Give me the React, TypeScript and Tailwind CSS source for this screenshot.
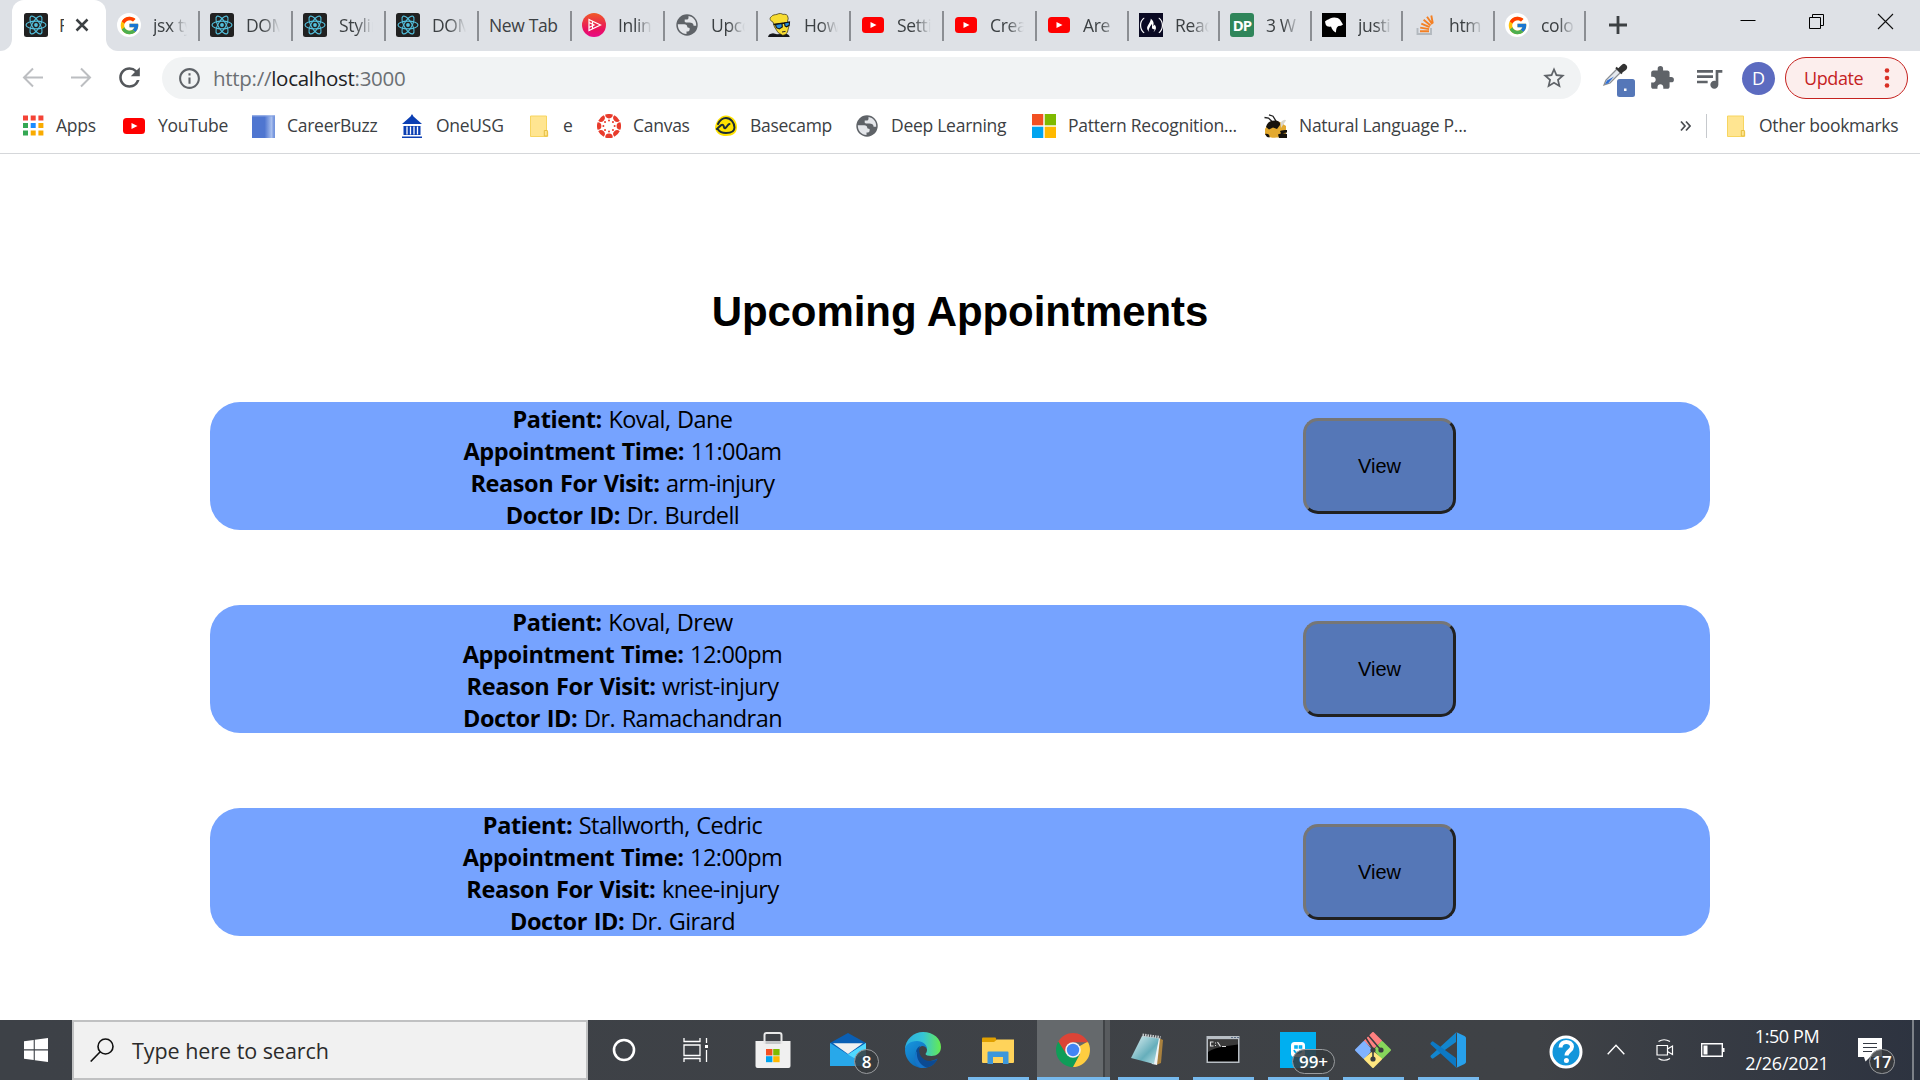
import React from "react";
import { FcGoogle } from "react-icons/fc";
import { SiFreecodecamp } from "react-icons/si";
import { MdExtension, MdInfoOutline, MdQueueMusic, MdRefresh, MdStarBorder } from "react-icons/md";

const ReactIcon = () => (
  <svg className="shrink-0" width="24" height="24" viewBox="0 0 24 24">
    <rect width="24" height="24" rx="2.5" fill="#212121" />
    <g fill="none" stroke="#53c1de" strokeWidth="1.1">
      <ellipse cx="12" cy="12" rx="10" ry="3.9" />
      <ellipse cx="12" cy="12" rx="10" ry="3.9" transform="rotate(60 12 12)" />
      <ellipse cx="12" cy="12" rx="10" ry="3.9" transform="rotate(120 12 12)" />
    </g>
    <circle cx="12" cy="12" r="1.9" fill="#53c1de" />
  </svg>
);

const GoogleIcon = () => (
  <span className="flex size-6 items-center justify-center rounded-full bg-white">
    <FcGoogle size={21} />
  </span>
);

const YouTubeIcon = () => (
  <svg width="24" height="24" viewBox="0 0 24 24">
    <rect x="1" y="4" width="22" height="16" rx="3.5" fill="#f00" />
    <path d="M9.5 9v6l6-3z" fill="#fff" />
  </svg>
);

const GlobeIcon = () => (
  <svg width="24" height="24" viewBox="0 0 24 24">
    <circle cx="12" cy="12" r="10.7" fill="#5f6368" />
    <path
      d="M2.8 11.2h6.4c2 0 3 1.2 3 2.4 0 1.1.9 1.4 2.4 1.4v1.8c0 .8-.6 1.6-1.6 1.6h-1.5v2.7C6.4 20.6 2.8 16.9 2.8 11.2zM13.5 2.9v2c0 .9-.7 1.5-1.7 1.5H9.7v2.2c0 .5.5.9 1 .9h3.6c2.5 0 4.3 1.2 4.3 3.2h2.6C21.5 7.4 18.2 3.5 13.5 2.9z"
      fill="#e4e6ea"
    />
  </svg>
);

const PlayIcon = () => (
  <svg width="24" height="24" viewBox="0 0 24 24">
    <defs>
      <linearGradient id="play" x1="0" y1="0" x2="0" y2="1">
        <stop offset="0" stopColor="#f05a28" />
        <stop offset="0.7" stopColor="#e9105e" />
        <stop offset="1" stopColor="#e80a89" />
      </linearGradient>
    </defs>
    <circle cx="12" cy="12" r="12" fill="url(#play)" />
    <path d="M7 6.5 18.5 12 7 17.5zM7 9.500l5 2.500-5 2.500M10.500 8.200v7.600" fill="none" stroke="#fff" strokeWidth="1.2" />
  </svg>
);

const AvatarIcon = () => (
  <svg width="24" height="24" viewBox="0 0 24 24">
    <path d="M0 24c.5-2.500 2-3.400 5-3.800l4 1 8-.5c2.500.2 4 1 4.800 3.300z" fill="#15171c" />
    <path d="M5 9C2 8 1 5 3.500 3.500 5 1.500 7 2 9 1.300c2.500-1.300 4.500-.8 6 .1 2.500-.6 5 .6 4.800 2.600.8 1.500.2 2.500-.3 4L21 13l-1.500 6c-1 2-3 3.500-5 3.200L10 19.500 6.500 14z" fill="#f7dc32" stroke="#332e12" strokeWidth=".7" />
    <path d="M5.500 11.500L21 9.500" stroke="#111" strokeWidth="1.3" />
    <path d="M7.500 11.500l6.500-1 .3 3.500-3 2-3-1.300zM16.500 10l5-1-.3 3.300-2.700 1.500-1.500-.8z" fill="#2a8fdd" stroke="#111" strokeWidth="1.1" />
    <path d="M14 19l3.500-.6" stroke="#222" strokeWidth="1" />
  </svg>
);

const FccIcon = () => (
  <span className="flex size-6 items-center justify-center bg-[#0a0a23] text-white">
    <SiFreecodecamp size={23} />
  </span>
);

const DpIcon = () => (
  <span className="flex size-6 items-center justify-center rounded-[3px] bg-[#2f855a] font-['Noto_Sans'] text-[15px] leading-none font-bold tracking-[-0.8px] text-white">
    DP
  </span>
);

const DogIcon = () => (
  <svg width="24" height="24" viewBox="0 0 24 24">
    <rect width="24" height="24" fill="#000" />
    <path d="M3 8.500C4.500 7 6.500 6.500 8 5.500c3-1.500 8-1.300 10 1.200l3 4.800-2 1.200-2.500.3c-1.800 1-2.300 2.500-2.500 6.500-2-.5-4-3-5-6-2.200.5-4.500 0-5.300-2z" fill="#fff" />
  </svg>
);

const StackIcon = () => (
  <svg width="24" height="24" viewBox="0 0 24 24">
    <path d="M4.500 15v6h13.500v-6" fill="none" stroke="#b3b9bf" strokeWidth="1.9" />
    <path d="M7 18.200h9M7.200 14.600l8.900 1.500M8.300 10.600l8.300 3.600M10.600 6.800l7 5.600M14 3.700l5.300 7.400M18.300 2.500l1.500 8" stroke="#f48024" strokeWidth="1.9" />
  </svg>
);

type TabData = { w: string; label: string; icon: () => React.ReactElement };

const tabs: TabData[] = [
  { w: "w-[93px]", label: "jsx type", icon: GoogleIcon },
  { w: "w-[93px]", label: "DOM", icon: ReactIcon },
  { w: "w-[93px]", label: "Styling", icon: ReactIcon },
  { w: "w-[93px]", label: "DOM", icon: ReactIcon },
  { w: "w-[93px]", label: "New Tab", icon: () => <></> },
  { w: "w-[93px]", label: "Inline", icon: PlayIcon },
  { w: "w-[93px]", label: "Upco", icon: GlobeIcon },
  { w: "w-[93px]", label: "How", icon: AvatarIcon },
  { w: "w-[93px]", label: "Settin", icon: YouTubeIcon },
  { w: "w-[93px]", label: "Creat", icon: YouTubeIcon },
  { w: "w-[92px]", label: "Are", icon: YouTubeIcon },
  { w: "w-[91px]", label: "React", icon: FccIcon },
  { w: "w-[92px]", label: "3 W", icon: DpIcon },
  { w: "w-[91px]", label: "justi", icon: DogIcon },
  { w: "w-[92px]", label: "htm", icon: StackIcon },
  { w: "w-[91px]", label: "colo", icon: GoogleIcon },
];

const Tab = ({ w, label, icon: Icon }: TabData) => (
  <div className={`flex h-[30px] shrink-0 items-center border-r-2 border-[#8b8e93] pb-[2px] pl-[10px] ${w}`}>
    {label === "New Tab" ? (
      <span className="text-[17.5px] tracking-[-0.35px] whitespace-nowrap">{label}</span>
    ) : (
      <>
        <Icon />
        <span className="ml-[12px] w-[34px] overflow-hidden text-[17.5px] tracking-[-0.35px] whitespace-nowrap [mask-image:linear-gradient(to_right,#000_50%,transparent)]">
          {label}
        </span>
      </>
    )}
  </div>
);

const TabStrip = () => (
  <div className="flex h-[51px] bg-[#dee1e6]">
    <div className="w-3 bg-white">
      <div className="h-full rounded-br-[12px] bg-[#dee1e6]" />
    </div>
    <div className="flex w-[94px] items-center rounded-t-[12px] bg-white pb-px pl-3">
      <ReactIcon />
      <span className="ml-[11px] w-[5px] overflow-hidden text-[17.5px]">F</span>
      <svg className="ml-[11px]" width="14" height="14" viewBox="0 0 14 14">
        <path d="M1.5 1.5l11 11M12.5 1.5l-11 11" stroke="#3c4043" strokeWidth="2.5" />
      </svg>
    </div>
    <div className="flex flex-1 bg-white">
      <div className="flex flex-1 rounded-bl-[12px] bg-[#dee1e6] pl-px">
        <div className="flex h-[50px] items-center pt-[2px]">
          {tabs.map((t, i) => (
            <Tab key={i} {...t} />
          ))}
          <svg className="-mt-[2px] ml-[22px]" width="20" height="20" viewBox="0 0 20 20">
            <path d="M10 1v18M1 10h18" stroke="#3c4043" strokeWidth="2.8" />
          </svg>
        </div>
        <svg className="mt-[13px] ml-[112px]" width="16" height="16" viewBox="0 0 16 16">
          <path d="M.5 7.500h15" stroke="#000" />
        </svg>
        <svg className="mt-[13px] ml-[52px]" width="17" height="17" viewBox="0 0 17 17">
          <path d="M1.500 4.500h11v11h-11zM4.500 4.500v-3h11v11h-3" fill="none" stroke="#000" />
        </svg>
        <svg className="mt-[13px] ml-[52px]" width="17" height="17" viewBox="0 0 17 17">
          <path d="M1 1l15 15M16 1L1 16" stroke="#111" strokeWidth="1.1" />
        </svg>
      </div>
    </div>
  </div>
);

const Toolbar = () => (
  <div className="flex h-[54px] items-center">
    <svg className="ml-[22px]" width="22" height="22" viewBox="0 0 22 22">
      <path d="M21 10.500H2.500M11 1.500l-9 9 9 9" fill="none" stroke="#bcbec1" strokeWidth="2" />
    </svg>
    <svg className="ml-[26px]" width="22" height="22" viewBox="0 0 22 22">
      <path d="M1 10.500h18.500M11 1.500l9 9-9 9" fill="none" stroke="#bcbec1" strokeWidth="2" />
    </svg>
    <MdRefresh className="-mt-px ml-[22px]" size={31} color="#54575b" />
    <div className="ml-[17px] flex h-[42px] w-[1419px] items-center rounded-full bg-[#f1f3f4] pl-[15px]">
      <MdInfoOutline size={25} color="#5f6368" />
      <span className="ml-[11px] flex-1 text-[20.5px] tracking-[-0.28px] text-[#6b6f73]">
        http://<span className="text-[#202124]">localhost</span>:3000
      </span>
      <MdStarBorder className="mr-[14px]" size={26} color="#5f6368" />
    </div>
    <svg className="mt-[2px] ml-[21px]" width="34" height="36" viewBox="0 0 34 36">
      <path d="M2 24l2-5L15 8l3.500 3.500L8 22z" fill="#e4e8ee" stroke="#8b8f94" strokeWidth="1.3" />
      <path d="M3 23l2-3.500 7-4-6 7z" fill="#2f6ed3" />
      <path d="M14 6.500l6 6M17 8l3-3c2-2.500 5.500 0 3.500 3l-4 3z" fill="#333" stroke="#333" strokeWidth="2" />
      <rect x="15" y="18" width="18" height="18" rx="2.5" fill="#5577b8" />
      <rect x="22" y="27.5" width="2.5" height="2.5" fill="#fff" />
    </svg>
    <MdExtension className="ml-[13px]" size={26} color="#5f6368" />
    <MdQueueMusic className="ml-[18px]" size={32} color="#5f6368" />
    <div className="ml-[17px] flex size-[33px] items-center justify-center rounded-full bg-[#5c6bc0] text-[18px] text-white">D</div>
    <div className="ml-[10px] flex h-[42px] w-[123px] items-center rounded-full border-[1.5px] border-[#c5221f] bg-[#fceeed] pl-[18px] text-[#c5221f]">
      <span className="w-[77px] text-[18px] tracking-[-0.4px]">Update</span>
      <svg width="12" height="24" viewBox="0 0 12 24">
        <circle cx="6" cy="4.5" r="2.3" fill="#d93025" />
        <circle cx="6" cy="12" r="2.3" fill="#d93025" />
        <circle cx="6" cy="19.5" r="2.3" fill="#d93025" />
      </svg>
    </div>
  </div>
);

const AppsIcon = () => (
  <svg width="24" height="24" viewBox="0 0 24 24">
    {["#f44336", "#f44336", "#f44336", "#34a853", "#1a8cff", "#f9ab00", "#34a853", "#f9ab00", "#f9ab00"].map((c, i) => (
      <rect key={i} x={3 + (i % 3) * 7.7} y={1.5 + Math.floor(i / 3) * 7.5} width="5" height="5" fill={c} />
    ))}
  </svg>
);

const BuzzIcon = () => (
  <svg width="24" height="24" viewBox="0 0 24 24">
    <defs>
      <linearGradient id="buzz">
        <stop offset="0.55" stopColor="#4f76d0" />
        <stop offset="0.85" stopColor="#a8bfee" />
        <stop offset="1" stopColor="#5c80d4" />
      </linearGradient>
    </defs>
    <rect x="1" y="1.5" width="23" height="22.5" fill="url(#buzz)" />
    <path d="M1 2h23v22" fill="none" stroke="#83a0e2" strokeWidth="1" />
  </svg>
);

const BankIcon = () => (
  <svg width="24" height="24" viewBox="0 0 24 24" fill="#0b3fb3">
    <path d="M12 0l1.500 2.500L22 10H2l8.500-7.500zM3.500 12h17v9h-17z" />
    <path d="M2 22.500h20V24H2z" />
    <path d="M7 12.500v8M10.500 12.500v8M14 12.500v8M17.500 12.500v8" stroke="#fff" strokeWidth="1.3" />
  </svg>
);

const FolderIcon = () => (
  <svg width="24" height="24" viewBox="0 0 24 24">
    <path d="M3.500 2h16v14.500l1.200 1v5H3.500z" fill="#ffe591" stroke="#f7d560" />
    <path d="M17.300 22v-5.500h3V22z" fill="#ffe591" stroke="#e6bf3f" />
  </svg>
);

const CanvasIcon = () => (
  <svg width="24" height="24" viewBox="0 0 24 24">
    {[0, 45, 90, 135, 180, 225, 270, 315].map((a) => (
      <g key={a} transform={`rotate(${a} 12 12)`} fill="#e83b2c">
        <path d="M8.200.6A12 12 0 0 1 15.800.6 3.800 3.800 0 0 1 8.200.6z" />
        <circle cx="12" cy="6.400" r="1" />
      </g>
    ))}
  </svg>
);

const BasecampIcon = () => (
  <svg width="24" height="24" viewBox="0 0 24 24">
    <path d="M12 1.500c6 0 11 5 11 11.500 0 6-4 9-11 9-6 0-9-2-11-7.500C1 8 6 1.500 12 1.500z" fill="#ffe200" />
    <path d="M2.800 15C5 13.500 7.500 9.500 9 11c1.500 1.500.5 4 2.500 3 1.500-1 2.500-4 4-4M4 10c2-4 5-6 8-6 5 0 8.500 5 8.500 9.500 0 4-4 5.500-8.500 5.500-3.500 0-6-.5-8-3.500" fill="none" stroke="#1d2d35" strokeWidth="2" strokeLinecap="round" />
  </svg>
);

const MicrosoftIcon = () => (
  <svg width="24" height="24" viewBox="0 0 24 24">
    <path d="M0 0h11.300v11.300H0z" fill="#f25022" />
    <path d="M12.700 0H24v11.300H12.700z" fill="#7fba00" />
    <path d="M0 12.700h11.300V24H0z" fill="#00a4ef" />
    <path d="M12.700 12.700H24V24H12.700z" fill="#ffb900" />
  </svg>
);

const BeeIcon = () => (
  <svg width="24" height="24" viewBox="0 0 24 24">
    <path d="M1.500 3.500l4 .5 4 4M6 .8l4 1.400 3 5" fill="none" stroke="#222" strokeWidth="1.3" />
    <path d="M2 15C5 9 12 7 17 8l6 4v10l-8 1.500c-5 .5-10 0-13-3z" fill="#e3a92f" />
    <path d="M3 13c1-5 6-7 10-6.500 3 .5 4.500 2 4 4.500L14 15l-4-1.500-4 2zM17 17c2-1 4-1 7-1v2.500l-6 1zM2 20c3-1 5 1 4.500 3.500L4 23zM15 20.500c3-1.500 6-1.500 9-.5v4h-8z" fill="#17130c" />
    <path d="M17.500 9c2-3 5-4 5.500-2.500L18 14z" fill="#d9d6cc" />
  </svg>
);

const bookmarks: { w: string; label: string; icon: () => React.ReactElement }[] = [
  { w: "w-[102px]", label: "Apps", icon: AppsIcon },
  { w: "w-[129px]", label: "YouTube", icon: YouTubeIcon },
  { w: "w-[149px]", label: "CareerBuzz", icon: BuzzIcon },
  { w: "w-[127px]", label: "OneUSG", icon: BankIcon },
  { w: "w-[70px]", label: "e", icon: FolderIcon },
  { w: "w-[117px]", label: "Canvas", icon: CanvasIcon },
  { w: "w-[141px]", label: "Basecamp", icon: BasecampIcon },
  { w: "w-[177px]", label: "Deep Learning", icon: GlobeIcon },
  { w: "w-[231px]", label: "Pattern Recognition...", icon: MicrosoftIcon },
  { w: "w-[260px]", label: "Natural Language P...", icon: BeeIcon },
];

const BookmarksBar = () => (
  <div className="flex h-[49px] items-center border-b border-[#d5d7da] pb-[6px] pl-5">
    {bookmarks.map(({ w, label, icon: Icon }) => (
      <div key={label} className={`flex shrink-0 items-center gap-[12px] ${w}`}>
        <Icon />
        <span className="-mt-px text-[17.5px] tracking-[-0.27px] whitespace-nowrap">{label}</span>
      </div>
    ))}
    <svg className="ml-[157px]" width="11" height="12" viewBox="0 0 11 12">
      <path d="M1 1.500L5 6l-4 4.500M6 1.500L10 6l-4 4.500" fill="none" stroke="#4a4d51" strokeWidth="1.7" />
    </svg>
    <div className="ml-[15px] h-6 w-px bg-[#c6c9cd]" />
    <div className="ml-[17px] flex items-center gap-[11px]">
      <FolderIcon />
      <span className="-mt-px text-[17.5px] tracking-[-0.3px] whitespace-nowrap">Other bookmarks</span>
    </div>
  </div>
);

const appointments = [
  { patient: "Koval, Dane", time: "11:00am", reason: "arm-injury", doctor: "Dr. Burdell" },
  { patient: "Koval, Drew", time: "12:00pm", reason: "wrist-injury", doctor: "Dr. Ramachandran" },
  { patient: "Stallworth, Cedric", time: "12:00pm", reason: "knee-injury", doctor: "Dr. Girard" },
];

const Line = ({ name, value }: { name: string; value: string }) => (
  <p className="whitespace-nowrap">
    <b className="tracking-[-0.4px]">{name}</b> {value}
  </p>
);

const Page = () => (
  <main className="flex h-[866px] flex-col items-center bg-white text-black">
    <h1 className="mt-[133px] font-['Liberation_Sans',sans-serif] text-[42px] leading-[50px] font-bold tracking-[-0.05px] whitespace-nowrap">Upcoming Appointments</h1>
    <div className="mt-[65px] flex w-[1500px] flex-col gap-[75px]">
      {appointments.map((a) => (
        <section key={a.patient} className="flex h-32 items-center rounded-[30px] bg-[#76a3ff]">
          <div className="w-[825px] pt-px text-center text-[23.5px] leading-8 tracking-[-0.55px] [word-spacing:1px]">
            <Line name="Patient:" value={a.patient} />
            <Line name="Appointment Time:" value={a.time} />
            <Line name="Reason For Visit:" value={a.reason} />
            <Line name="Doctor ID:" value={a.doctor} />
          </div>
          <button className="ml-[268px] h-24 w-[153px] rounded-[15px] border-[3px] border-t-[#767676] border-r-[#212121] border-b-[#212121] border-l-[#767676] bg-[#5577b7] font-['Liberation_Sans',sans-serif] text-[20px]">
            View
          </button>
        </section>
      ))}
    </div>
  </main>
);

const StoreIcon = () => (
  <svg width="36" height="36" viewBox="0 0 36 36">
    <path d="M0.500 9H35.500V34a2 2 0 0 1-2 2h-31a2 2 0 0 1-2-2z" fill="#f0f0f0" />
    <path d="M9.500 12V3a2 2 0 0 1 2-2h13a2 2 0 0 1 2 2v9" fill="none" stroke="#e8e8e8" strokeWidth="2" />
    <path d="M10.500 9h15v3h-15z" fill="#c4c6c8" />
    <path d="M11 17h6.400v6.400H11z" fill="#f25022" />
    <path d="M18.200 17h6.400v6.400h-6.400z" fill="#7fba00" />
    <path d="M11 24.200h6.400v6H11z" fill="#00a4ef" />
    <path d="M18.200 24.200h6.400v6h-6.400z" fill="#ffb900" />
  </svg>
);

const MailIcon = () => (
  <svg width="36" height="36" viewBox="0 0 36 36">
    <path d="M0 11L18 1l18 10v23H0z" fill="#0a5fb4" />
    <path d="M0 11l18 11.500L36 11v23H0z" fill="#28a8ea" />
    <path d="M18 22.500L36 11v12L24 26z" fill="#50d9ff" />
    <path d="M3 11.200h30L18 22z" fill="#f1f1f1" />
  </svg>
);

const EdgeIcon = () => (
  <svg width="36" height="36" viewBox="0 0 36 36">
    <defs>
      <linearGradient id="edgeTop">
        <stop offset="0" stopColor="#2bafdf" />
        <stop offset="0.5" stopColor="#35c4d6" />
        <stop offset="1" stopColor="#66eb4f" />
      </linearGradient>
      <linearGradient id="edgeLow" x1="0" y1="0" x2="1" y2="1">
        <stop offset="0" stopColor="#1797df" />
        <stop offset="1" stopColor="#0b59a8" />
      </linearGradient>
    </defs>
    <path d="M0 18C0 7 9 0 18 0c11 0 18 7 18 15 0 6-4.500 9-9.500 9-3.500 0-6-1-6-2 0-.8 1.500-1.500 1.500-4 0-3-3-7-9-7C5 11 0 15 0 18z" fill="url(#edgeTop)" />
    <path d="M0 18c0-5 5-9 12-9 6 0 10 4 10 8-1.500-3-5-4-7-2-4 4-1 13 6 14 5 .7 8-1 11.500-2.500C30 32.500 25 36 18 36 8 36 0 28 0 18z" fill="url(#edgeLow)" />
    <path d="M15 14c-6 3-6 14 3 22 7 0 12-4 14.500-9C30 28.500 28 29 25 29c-8 0-13-8-10-15z" fill="#0c4a92" />
    <path d="M12 19c-1 8 3 14 10 16.600-2 .4-4 .5-6 .3C9 33 8 25 12 19z" fill="#1674c9" />
  </svg>
);

const ExplorerIcon = () => (
  <svg width="36" height="36" viewBox="0 0 36 36">
    <path d="M2 6.500q0-1 1-1h12.500l1 2v6H2z" fill="#e0a000" />
    <path d="M2 10h12l3-2.500h17V30q0 1-1 1H3q-1 0-1-1z" fill="#ffd35a" />
    <path d="M7.500 32V20.500q0-1 1-1h19q1 0 1 1V32H23v-7H13v7z" fill="#3d97db" />
  </svg>
);

const ChromeIcon = () => (
  <svg width="36" height="36" viewBox="-18 -18 36 36">
    <path d="M0 0L-14.700-8.500A17 17 0 0 0 0 17L7 4z" fill="#0f9d58" />
    <path d="M0 0L14.700-8.500A17 17 0 0 1 0 17L7 4z" fill="#ffcd40" />
    <path d="M0-7.800h15.100L14.700-8.500A17 17 0 0 0-14.700-8.500L-6.700 4z" fill="#db4437" />
    <circle r="7.8" fill="#f4f4f4" />
    <circle r="6.2" fill="#4285f4" />
  </svg>
);

const NotepadIcon = () => (
  <svg width="36" height="36" viewBox="0 0 36 36">
    <defs>
      <linearGradient id="note" x1="0" y1="0" x2="1" y2="1">
        <stop offset="0" stopColor="#e2f3f5" />
        <stop offset="0.6" stopColor="#66aebb" />
        <stop offset="1" stopColor="#c4e6ea" />
      </linearGradient>
    </defs>
    <path d="M29 6l4 2-2 23-5 2z" fill="#a9813e" />
    <path d="M12 4l18 2.500-3 26.500-5-1z" fill="#f2f5f6" />
    <path d="M12 4l17 2-5 26L1 26z" fill="url(#note)" />
    <path d="M12.500 3l18 2.500" stroke="#c9ccce" strokeWidth="3" strokeDasharray="1.5 1" />
  </svg>
);

const CmdIcon = () => (
  <svg width="36" height="36" viewBox="0 0 36 36">
    <path d="M1.500 4h33v27h-33z" fill="#b8bec4" />
    <path d="M3 7.500h30V29.500H3z" fill="#000" />
    <path d="M3 7.500h30v5C24 14 12 14 3 20z" fill="#3a3a3a" />
    <path d="M8.500 10H5.500v4h3M10 11h1M10 13.500h1M12.500 10l3 4.500M17 14.500h4" fill="none" stroke="#ddd" strokeWidth="1.2" />
    <path d="M26 5.500h2M29 5.500h2M32 5.500h2" stroke="#5a6c85" />
  </svg>
);

const GroupIcon = () => (
  <svg width="36" height="36" viewBox="0 0 36 36">
    <path d="M0 0h36v36H0z" fill="#00aff0" />
    <rect x="11" y="10" width="14" height="15" rx="3.5" fill="#fff" />
    <path d="M15 14h2v2h-2zM19.500 14h2v2h-2zM14 18c1 4 7 4 8 0" fill="none" stroke="#00aff0" strokeWidth="1.6" />
  </svg>
);

const GitIcon = () => (
  <svg width="36" height="36" viewBox="0 0 36 36">
    <g strokeLinejoin="round" strokeWidth="2">
      <path d="M18 1l8 8-8 7-8-7z" fill="#ff8080" stroke="#ff8080" />
      <path d="M9 10l7 8-7 8-8-8z" fill="#80b3ff" stroke="#80b3ff" />
      <path d="M27 10l8 8-8 8-7-8z" fill="#87d65b" stroke="#87d65b" />
      <path d="M18 20l8 7-8 8-8-8z" fill="#ffe680" stroke="#ffe680" />
    </g>
    <path d="M10.500 5.500L18 17M13 3l12 14M18 17v10" fill="none" stroke="#3a3c40" strokeWidth="1.6" />
    <circle cx="18" cy="18" r="2.6" fill="#3a3c40" />
    <circle cx="18" cy="27" r="2.6" fill="#3a3c40" />
    <circle cx="26" cy="18" r="2.6" fill="#3a3c40" />
  </svg>
);

const CodeIcon = () => (
  <svg width="36" height="36" viewBox="0 0 36 36">
    <path d="M2.800 26.800q-1-.1-2-1.500-.8-1 0-1.800L26 .5V10z" fill="#1286cf" />
    <path d="M2.800 9.200q-1 .1-2 1.500-.8 1 0 1.800L26 35.500V26z" fill="#0d79c4" />
    <path d="M26 0l8.500 4Q36 4.800 36 6v24q0 1.200-1.500 2L26 36q1-.5 1-2V2q0-1.500-1-2z" fill="#27a0ec" />
  </svg>
);

const Badge = ({ text, pos }: { text: string; pos: string }) => (
  <span className={`absolute flex h-[25px] items-center justify-center rounded-full border border-[#9a9c9f] bg-[#36393d]/85 text-[17px] leading-none font-semibold text-white ${pos}`}>
    {text}
  </span>
);

const Slot = ({ children, open = false }: { children: React.ReactNode; open?: boolean }) => (
  <div className="relative flex h-[60px] w-[75px] flex-col items-center">
    <div className="flex h-[57px] items-center pt-[3px]">{children}</div>
    {open && <div className="h-[3px] w-[61px] bg-[#76b9ed]" />}
  </div>
);

const Taskbar = () => (
  <footer className="flex h-[60px] bg-linear-to-r from-[#3d4147] via-[#3f4246] via-80% to-[#2d3340] text-white">
    <div className="flex w-[72px] items-center justify-center">
      <svg width="24" height="24" viewBox="0 0 24 24" fill="#fff">
        <path d="M0 3.300L9.700 2v9.300H0zM10.800 1.800L24 0v11.300H10.800zM0 12.500h9.700V22L0 20.700zM10.800 12.500H24V24l-13.200-1.800z" />
      </svg>
    </div>
    <div className="flex w-[516px] items-center border-2 border-[#c0c1c2] bg-[#f1f1f1] pl-4 text-[#2b2b2b]">
      <svg width="24" height="24" viewBox="0 0 24 24">
        <circle cx="15.5" cy="8.5" r="7.5" fill="none" stroke="#111" strokeWidth="1.6" />
        <path d="M10.500 13.500L.7 23.500" stroke="#111" strokeWidth="1.6" />
      </svg>
      <span className="mt-[3px] ml-[18px] text-[21.5px] tracking-[-0.05px]">Type here to search</span>
    </div>
    <div className="-ml-[2px] flex w-[976px]">
      <Slot>
        <svg width="24" height="24" viewBox="0 0 24 24">
          <circle cx="12" cy="12" r="10" fill="none" stroke="#fff" strokeWidth="2.6" />
        </svg>
      </Slot>
      <Slot>
        <svg className="-ml-[6px]" width="26" height="24" viewBox="0 0 26 24" fill="none" stroke="#fff" strokeWidth="1.3">
          <path d="M1 0v3.500h16V0M1 7h16v10.500H1zM1 24v-3.500h16V24M23.500 0v5M23.500 12v12" />
          <path d="M22 7h3v3h-3z" fill="#fff" stroke="none" />
        </svg>
      </Slot>
      <Slot><span className="-ml-[2px]"><StoreIcon /></span></Slot>
      <Slot>
        <span className="-ml-px"><MailIcon /></span>
        <Badge text="8" pos="left-[43px] top-[29px] w-[25px]" />
      </Slot>
      <Slot><span className="-ml-px"><EdgeIcon /></span></Slot>
      <Slot open><span className="-ml-px"><ExplorerIcon /></span></Slot>
      <div className="ml-px flex h-[60px] w-[74px]">
        <div className="flex w-[66px] flex-col items-center bg-[#65696c]">
          <div className="flex h-[57px] items-center pt-[3px] pl-[6px]"><ChromeIcon /></div>
          <div className="h-[3px] w-full bg-[#76b9ed]" />
        </div>
        <div className="flex w-[7px] flex-col">
          <div className="h-[57px] border-l-2 border-[#404346] bg-[#585b5e]" />
          <div className="h-[3px] bg-[#76b9ed]" />
        </div>
      </div>
      <Slot open><span className="-ml-[2px]"><NotepadIcon /></span></Slot>
      <Slot open><span className="-ml-[2px]"><CmdIcon /></span></Slot>
      <Slot open>
        <span className="-ml-px"><GroupIcon /></span>
        <Badge text="99+" pos="left-[31px] top-[29px] w-[43px]" />
      </Slot>
      <Slot open><span className="-ml-px"><GitIcon /></span></Slot>
      <Slot open><span className="-ml-px"><CodeIcon /></span></Slot>
    </div>
    <div className="flex flex-1 items-center">
      <svg className="mt-1 -ml-[13px]" width="34" height="34" viewBox="0 0 34 34">
        <circle cx="17" cy="17" r="15" fill="#1296db" stroke="#fff" strokeWidth="3" />
        <path d="M11.500 12.500c0-7.500 11.500-7 11.500-.7 0 4-5.500 4.200-5.500 8.700" fill="none" stroke="#fff" strokeWidth="4" />
        <circle cx="17.4" cy="25.5" r="2.5" fill="#fff" />
      </svg>
      <svg className="-mt-[2px] ml-[24px]" width="18" height="11" viewBox="0 0 18 11">
        <path d="M.7 10.300L9 1.300l8.300 9" fill="none" stroke="#fff" strokeWidth="1.4" />
      </svg>
      <svg className="ml-[31px]" width="18" height="24" viewBox="0 0 18 24" fill="none" stroke="#fff" strokeWidth="1.2">
        <path d="M1 7.500h10.500v9.500H1zM11.500 11l5-3v8.500l-5-3M2.500 3.500Q8 0 14 3.500M2.500 20.500Q8 24 14 20.500" />
      </svg>
      <svg className="ml-[27px]" width="24" height="14" viewBox="0 0 24 14">
        <path d="M.7.7h20.600v12.600H.7z" fill="none" stroke="#fff" strokeWidth="1.4" />
        <path d="M2.500 2.500h4v9h-4zM22 5h1.500v4H22z" fill="#fff" />
      </svg>
      <div className="ml-[11px] w-[102px] text-center text-[18px] leading-[27px] tracking-[-0.4px]">
        <div>1:50 PM</div>
        <div className="tracking-[-0.2px]">2/26/2021</div>
      </div>
      <div className="relative ml-[20px]">
        <svg width="24" height="24" viewBox="0 0 24 24">
          <path d="M0 0h24v19H12l-4.500 4.500L6 19H0z" fill="#fff" />
          <path d="M5 5.500h14M5 9.500h14M5 13.500h9" stroke="#353a44" strokeWidth="1.2" />
        </svg>
        <Badge text="17" pos="left-[11px] top-[11px] w-[26px]" />
      </div>
      <div className="mr-[6px] ml-auto h-full w-[2px] bg-[#7d8188]" />
    </div>
  </footer>
);

export default function App() {
  return (
    <div className="flex h-[1080px] w-[1920px] flex-col overflow-hidden bg-white font-['Open_Sans','Noto_Sans',sans-serif] text-[#3c4043]">
      <TabStrip />
      <Toolbar />
      <BookmarksBar />
      <Page />
      <Taskbar />
    </div>
  );
}
